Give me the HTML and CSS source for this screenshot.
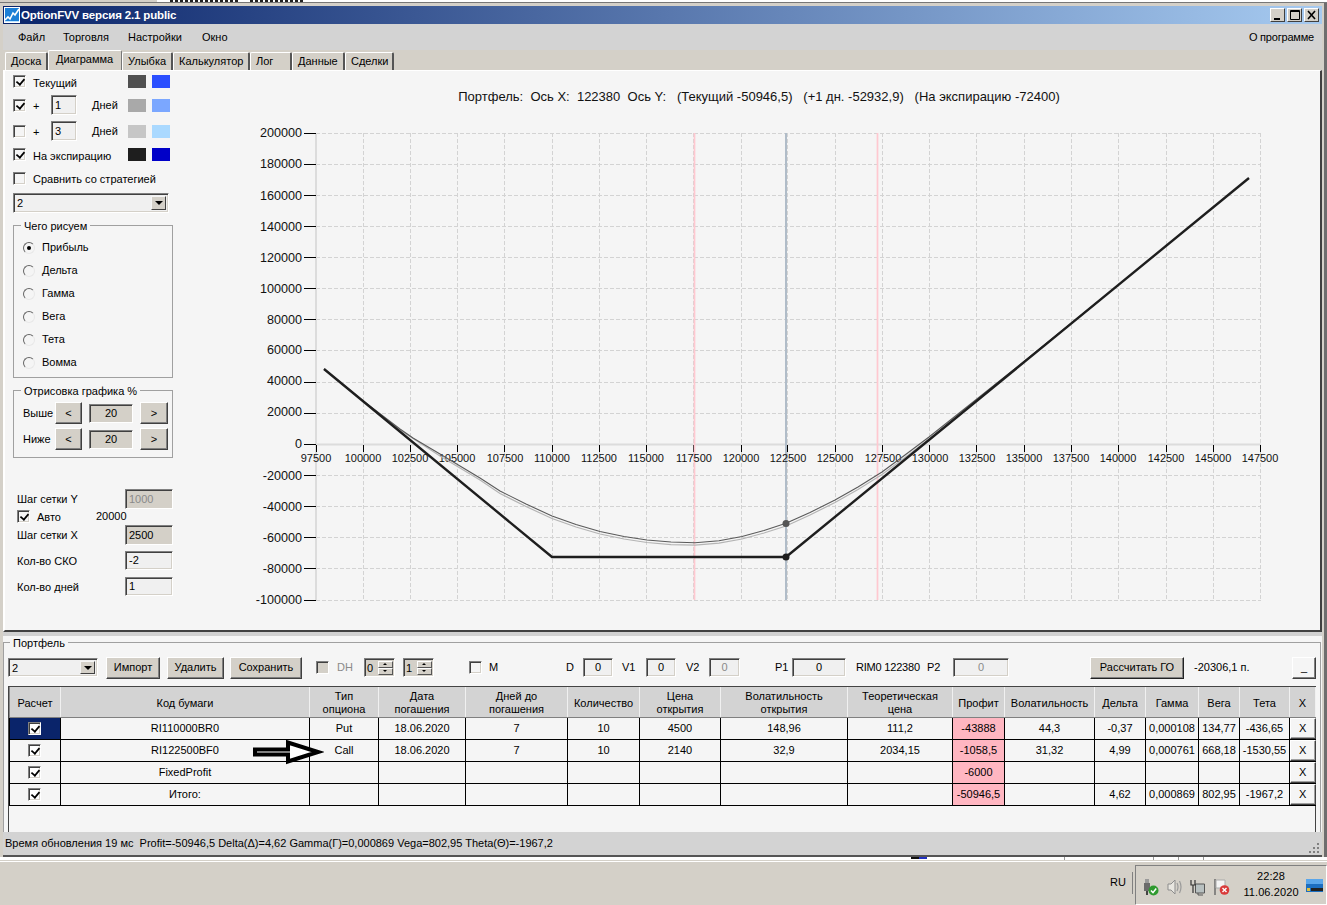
FILE: index.html
```html
<!DOCTYPE html>
<html lang="ru">
<head>
<meta charset="utf-8">
<title>OptionFVV</title>
<link rel="stylesheet" href="styles.css">
</head>
<body>
<div class="screen">
  <div class="desk-top"><span class="frag frag-a"></span><span class="frag frag-b"></span></div>
  <div class="window">
    <div class="titlebar">
      <svg class="logo" width="16" height="16" viewBox="0 0 16 16"><rect width="16" height="16" fill="#fff"/><rect x="1" y="1" width="14" height="14" fill="#1c7fd6"/><path d="M1 13 4 10 6 12 9 6 11 8 15 2" fill="none" stroke="#fff" stroke-width="1.6"/><path d="M1 15H15V14H1Z" fill="#bfe6ff"/></svg>
      <span class="title-text">OptionFVV версия 2.1 public</span>
      <span class="wbtns">
        <span class="wbtn"><svg width="13" height="12" viewBox="0 0 13 12"><path d="M3 9h6v2H3z" fill="#000"/></svg></span>
        <span class="wbtn"><svg width="13" height="12" viewBox="0 0 13 12"><path d="M2.5 1.5h9v9h-9z M2 2.5h10" fill="none" stroke="#000"/></svg></span>
        <span class="wbtn"><svg width="13" height="12" viewBox="0 0 13 12"><path d="M3 2l7 8M10 2l-7 8" fill="none" stroke="#000" stroke-width="1.6"/></svg></span>
      </span>
    </div>
    <div class="menubar">
      <span class="mi mi-1">Файл</span><span class="mi mi-2">Торговля</span><span class="mi mi-3">Настройки</span><span class="mi mi-4">Окно</span>
      <span class="mi about">О программе</span>
    </div>
    <div class="tabs">
      <span class="tab t-1">Доска</span><span class="tab t-2 active">Диаграмма</span><span class="tab t-3">Улыбка</span><span class="tab t-4">Калькулятор</span><span class="tab t-5">Лог</span><span class="tab t-6">Данные</span><span class="tab t-7">Сделки</span>
    </div>
    <div class="panel">
      <div class="side">
        <div class="row h13"><span class="chk on"></span><span class="lbl grow">Текущий</span><span class="sw c-a"></span><span class="sw c-b"></span></div>
        <div class="row h20 mt7"><span class="chk on"></span><span class="plus">+</span><span class="field w26">1</span><span class="lbl days grow">Дней</span><span class="sw c-c"></span><span class="sw c-d"></span></div>
        <div class="row h20 mt6"><span class="chk"></span><span class="plus">+</span><span class="field w26">3</span><span class="lbl days grow">Дней</span><span class="sw c-e"></span><span class="sw c-f"></span></div>
        <div class="row h13 mt7"><span class="chk on"></span><span class="lbl grow">На экспирацию</span><span class="sw c-g"></span><span class="sw c-h"></span></div>
        <div class="row h13 mt11"><span class="chk"></span><span class="lbl grow cmp">Сравнить со стратегией</span></div>
        <div class="combo w156 h20 mt8"><span class="combo-val">2</span><span class="combo-btn"><i class="tri"></i></span></div>
        <div class="group g-what mt12">
          <span class="legend">Чего рисуем</span>
          <div class="rad"><span class="radio on"></span><span class="lbl">Прибыль</span></div>
          <div class="rad"><span class="radio"></span><span class="lbl">Дельта</span></div>
          <div class="rad"><span class="radio"></span><span class="lbl">Гамма</span></div>
          <div class="rad"><span class="radio"></span><span class="lbl">Вега</span></div>
          <div class="rad"><span class="radio"></span><span class="lbl">Тета</span></div>
          <div class="rad"><span class="radio"></span><span class="lbl">Вомма</span></div>
        </div>
        <div class="group g-draw mt12">
          <span class="legend">Отрисовка графика %</span>
          <div class="draw-row"><span class="draw-l">Выше</span><span class="btn b-l">&lt;</span><span class="field gray f-draw">20</span><span class="btn b-r">&gt;</span></div>
          <div class="draw-row"><span class="draw-l">Ниже</span><span class="btn b-l">&lt;</span><span class="field gray f-draw">20</span><span class="btn b-r">&gt;</span></div>
        </div>
        <div class="prop h20 mt31"><span class="grow">Шаг сетки Y</span><span class="field gray dim w48">1000</span></div>
        <div class="prop h12 mt1"><span class="chk on"></span><span class="auto-l">Авто</span><span>20000</span></div>
        <div class="prop h20 mt3"><span class="grow">Шаг сетки X</span><span class="field gray w48">2500</span></div>
        <div class="prop h19 mt6"><span class="grow">Кол-во СКО</span><span class="field w48">-2</span></div>
        <div class="prop h19 mt7"><span class="grow">Кол-во дней</span><span class="field w48">1</span></div>
      </div>
      <svg class="chart" width="1140" height="560" viewBox="180 71 1140 560">
        <text class="chart-title" x="759" y="101">Портфель:  Ось X:  122380  Ось Y:   (Текущий -50946,5)   (+1 дн. -52932,9)   (На экспирацию -72400)</text>
        <path class="grid" d="M316 133.5H1261M316 164.5H1261M316 195.5H1261M316 226.5H1261M316 257.5H1261M316 288.5H1261M316 319.5H1261M316 350.5H1261M316 382.5H1261M316 413.5H1261M316 475.5H1261M316 506.5H1261M316 537.5H1261M316 568.5H1261M316 600.5H1261"/>
        <path class="grid" d="M363.5 133V600M410.5 133V600M457.5 133V600M504.5 133V600M552.5 133V600M599.5 133V600M646.5 133V600M693.5 133V600M741.5 133V600M787.5 133V600M835.5 133V600M882.5 133V600M929.5 133V600M976.5 133V600M1024.5 133V600M1071.5 133V600M1118.5 133V600M1166.5 133V600M1213.5 133V600M1260.5 133V600"/>
        <path class="axis" d="M316 133V600M316 444.5H1261"/>
        <path class="tick" d="M304 133.5H316M304 164.5H316M304 195.5H316M304 226.5H316M304 257.5H316M304 288.5H316M304 319.5H316M304 350.5H316M304 382.5H316M304 413.5H316M304 444.5H316M304 475.5H316M304 506.5H316M304 537.5H316M304 568.5H316M304 600.5H316"/>
        <path class="tick" d="M316.5 445V452M363.5 445V452M410.5 445V452M457.5 445V452M504.5 445V452M552.5 445V452M599.5 445V452M646.5 445V452M693.5 445V452M741.5 445V452M787.5 445V452M835.5 445V452M882.5 445V452M929.5 445V452M976.5 445V452M1024.5 445V452M1071.5 445V452M1118.5 445V452M1166.5 445V452M1213.5 445V452M1260.5 445V452"/>
        <path class="pink" d="M694.5 133V600M877.5 133V600"/>
        <path class="steel" d="M786 133V600"/>
        <g class="ylab">
          <text x="302" y="137">200000</text><text x="302" y="168">180000</text><text x="302" y="200">160000</text><text x="302" y="231">140000</text><text x="302" y="262">120000</text><text x="302" y="293">100000</text><text x="302" y="324">80000</text><text x="302" y="354">60000</text><text x="302" y="385">40000</text><text x="302" y="416">20000</text><text x="302" y="448">0</text><text x="302" y="480">-20000</text><text x="302" y="511">-40000</text><text x="302" y="542">-60000</text><text x="302" y="573">-80000</text><text x="302" y="604">-100000</text>
        </g>
        <g class="xlab">
          <text x="316" y="462">97500</text><text x="363" y="462">100000</text><text x="410" y="462">102500</text><text x="457" y="462">105000</text><text x="505" y="462">107500</text><text x="552" y="462">110000</text><text x="599" y="462">112500</text><text x="646" y="462">115000</text><text x="694" y="462">117500</text><text x="741" y="462">120000</text><text x="788" y="462">122500</text><text x="835" y="462">125000</text><text x="883" y="462">127500</text><text x="930" y="462">130000</text><text x="977" y="462">132500</text><text x="1024" y="462">135000</text><text x="1071" y="462">137500</text><text x="1118" y="462">140000</text><text x="1166" y="462">142500</text><text x="1213" y="462">145000</text><text x="1260" y="462">147500</text>
        </g>
        <polyline class="c-light" points="324,369 360,398.6 400,430 440,456 480,480 500,493.5 526,506.5 552,518.5 576,527 600,534 624,539 647,542.5 671,544.6 695,545.2 719,543.2 742,539 764,533 786,526 810,515 835,502.5 858,489.5 882,474.5 905,457.5 929,439 980,398 1040,349 1100,300"/>
        <polyline class="c-cur" points="324,369 360,398.5 400,429 413,438 440,454 480,478 500,491 526,504 552,516 576,524.5 600,531.5 624,536.5 647,540 671,542 695,542.7 719,540.8 742,536.5 764,530.5 786,523.3 810,512.5 835,500 858,487 882,472 905,455 929,437 980,396.5 1040,348.5 1100,300"/>
        <polyline class="c-exp" points="324,369 552,557 786,557 1249,178"/>
        <circle class="d-cur" cx="786" cy="523.5" r="3.5"/>
        <circle class="d-exp" cx="786" cy="557" r="3.5"/>
      </svg>
    </div>
    <div class="portfolio">
      <div class="pgroup">
        <span class="legend leg-p">Портфель</span>
        <div class="ctrls">
          <div class="combo w90 h19"><span class="combo-val">2</span><span class="combo-btn"><i class="tri"></i></span></div>
          <span class="btn b-imp">Импорт</span>
          <span class="btn b-del">Удалить</span>
          <span class="btn b-sav">Сохранить</span>
          <span class="chk off ml14"></span><span class="dim l-dh">DH</span>
          <span class="spin"><span class="spin-v">0</span><span class="spin-b"><i class="up"></i><i class="dn"></i></span></span>
          <span class="spin ml8"><span class="spin-v">1</span><span class="spin-b"><i class="up"></i><i class="dn"></i></span></span>
          <span class="chk ml35"></span><span class="l-m">M</span>
          <span class="l-d">D</span><span class="field ctr w30">0</span>
          <span class="l-v1">V1</span><span class="field ctr w30">0</span>
          <span class="l-v2">V2</span><span class="field ctr dim w31">0</span>
          <span class="l-p1">P1</span><span class="field ctr w54">0</span>
          <span class="l-rim">RIM0 122380</span><span class="l-p2">P2</span><span class="field ctr dim w56">0</span>
          <span class="btn b-go">Рассчитать ГО</span>
          <span class="l-go">-20306,1 п.</span>
          <span class="btn b-min">_</span>
        </div>
        <div class="gridwrap">
          <table class="dg">
            <colgroup>
              <col class="k51"><col class="k249"><col class="k69"><col class="k87"><col class="k102"><col class="k72"><col class="k81"><col class="k127"><col class="k105"><col class="k52"><col class="k90"><col class="k51"><col class="k53"><col class="k41"><col class="k50"><col class="k26">
            </colgroup>
            <thead>
              <tr><th>Расчет</th><th>Код бумаги</th><th>Тип<br>опциона</th><th>Дата<br>погашения</th><th>Дней до<br>погашения</th><th>Количество</th><th>Цена<br>открытия</th><th>Волатильность<br>открытия</th><th>Теоретическая<br>цена</th><th>Профит</th><th>Волатильность</th><th>Дельта</th><th>Гамма</th><th>Вега</th><th>Тета</th><th>X</th></tr>
            </thead>
            <tbody>
              <tr><td class="sel"><span class="chk on cell"></span></td><td>RI110000BR0</td><td>Put</td><td>18.06.2020</td><td>7</td><td>10</td><td>4500</td><td>148,96</td><td>111,2</td><td class="loss">-43888</td><td>44,3</td><td>-0,37</td><td>0,000108</td><td>134,77</td><td>-436,65</td><td class="xc"><span class="xbtn">X</span></td></tr>
              <tr><td><span class="chk on cell"></span></td><td>RI122500BF0</td><td>Call</td><td>18.06.2020</td><td>7</td><td>10</td><td>2140</td><td>32,9</td><td>2034,15</td><td class="loss">-1058,5</td><td>31,32</td><td>4,99</td><td>0,000761</td><td>668,18</td><td>-1530,55</td><td class="xc"><span class="xbtn">X</span></td></tr>
              <tr><td><span class="chk on cell"></span></td><td>FixedProfit</td><td></td><td></td><td></td><td></td><td></td><td></td><td></td><td class="loss">-6000</td><td></td><td></td><td></td><td></td><td></td><td class="xc"><span class="xbtn">X</span></td></tr>
              <tr><td><span class="chk on cell"></span></td><td>Итого:</td><td></td><td></td><td></td><td></td><td></td><td></td><td></td><td class="loss">-50946,5</td><td></td><td>4,62</td><td>0,000869</td><td>802,95</td><td>-1967,2</td><td class="xc"><span class="xbtn">X</span></td></tr>
            </tbody>
          </table>
          <svg class="arrow" width="72" height="26" viewBox="0 0 72 26"><path d="M3 10.500H36V3.500L66 13 36 22.500V15.500H3Z" fill="#fff" stroke="#000" stroke-width="4"/></svg>
        </div>
      </div>
    </div>
    <div class="status">
      <span>Время обновления 19 мс&nbsp; Profit=-50946,5 Delta(Δ)=4,62 Gamma(Г)=0,000869 Vega=802,95 Theta(Θ)=-1967,2</span>
      <svg class="grip" width="12" height="12" viewBox="0 0 12 12"><path d="M9 2h2v2H9zM5 6h2v2H5zM9 6h2v2H9zM1 10h2v2H1zM5 10h2v2H5zM9 10h2v2H9z" fill="#808080"/></svg>
    </div>
  </div>
  <div class="gapstrip"><span class="gapmark"></span></div>
  <div class="taskbar">
    <span class="lang">RU</span>
    <div class="tray">
      <svg class="ti" width="17" height="18" viewBox="0 0 17 18"><path d="M3 1h4v4H3z" fill="#9a9a9a"/><path d="M2 5h6v8H2z" fill="#6b6b6b"/><path d="M4 13h2v4H4z" fill="#444"/><circle cx="11.5" cy="12.5" r="5" fill="#2f9a2f"/><path d="M9 12.5l2 2.2 3.2-4.2" fill="none" stroke="#fff" stroke-width="1.5"/></svg>
      <svg class="ti" width="16" height="18" viewBox="0 0 16 18"><path d="M2 6h3l4-4v14l-4-4H2z" fill="#e8e6e0" stroke="#8d8d8d"/><path d="M11 5q2 4 0 8M13.5 3q3 6 0 12" fill="none" stroke="#9a9a9a" stroke-width="1.2"/></svg>
      <svg class="ti" width="17" height="18" viewBox="0 0 17 18"><path d="M6.5 6h9v9h-9z" fill="#b8c0c0" stroke="#555"/><path d="M9 15v2h5" fill="none" stroke="#555"/><path d="M2 2v5h4V2M4 7v8" fill="none" stroke="#333" stroke-width="1.2"/></svg>
      <svg class="ti" width="17" height="18" viewBox="0 0 17 18"><path d="M2 1v16" stroke="#666" stroke-width="1.4"/><path d="M3 2h9v8H3z" fill="#f4f4f4" stroke="#aaa"/><circle cx="11.5" cy="12" r="4.8" fill="#d93a3a"/><path d="M9.5 10l4 4M13.500 10l-4 4" stroke="#fff" stroke-width="1.4"/></svg>
      <div class="clock"><span>22:28</span><span>11.06.2020</span></div>
      <svg class="ti desk" width="17" height="13" viewBox="0 0 17 13"><rect width="17" height="13" fill="#1c6ec0"/><path d="M0 0h17v5H0z" fill="#5aa6ea"/><path d="M5 9h12v3H5z" fill="#222"/><path d="M1 9h3v3H1z" fill="#e0c040"/></svg>
    </div>
  </div>
</div>
</body>
</html>
```

FILE: styles.css
```css
* { box-sizing: border-box; }
html, body { margin: 0; padding: 0; }
body { font: 11px/13px "Liberation Sans", Arial, sans-serif; color: #000; background: #d4d0c8; }
.screen { width: 1327px; height: 905px; overflow: hidden; display: flex; flex-direction: column; }

.desk-top { height: 3px; flex: none; background: linear-gradient(90deg, #d4d0c8 0 157px, #fff 157px); display: flex; border-bottom: 1px solid #777; }
.frag { height: 2px; display: block; background: repeating-linear-gradient(90deg, #222 0 3px, transparent 3px 5px); }
.frag-a { margin-left: 170px; width: 70px; }
.frag-b { margin-left: 10px; width: 55px; }

.window { flex: none; width: 1327px; height: 854px; border-left: 3px solid #d4d0c8; border-right: 3px solid #6e6e6e; padding: 3px 2px 0 0; background: #d4d0c8; display: flex; flex-direction: column; }
.titlebar { flex: none; height: 18px; display: flex; align-items: center; padding: 0 3px 0 1px; color: #fff; background: linear-gradient(90deg, #0a246a, #a6caf0); }
.logo { flex: none; }
.title-text { margin-left: 1px; font: bold 11.5px/18px "Liberation Sans", Arial, sans-serif; letter-spacing: -.15px; }
.wbtns { margin-left: auto; display: flex; gap: 2px; }
.wbtn { width: 15px; height: 14px; display: flex; align-items: center; justify-content: center; background: #d4d0c8; border: 1px solid; border-color: #fff #404040 #404040 #fff; }

.menubar { flex: none; height: 26px; display: flex; align-items: center; background: #d3d3d3; }
.mi-1 { margin-left: 15px; width: 45px; }
.mi-2 { width: 65px; }
.mi-3 { width: 74px; }
.about { margin-left: auto; margin-right: 8px; letter-spacing: -.2px; }

.tabs { flex: none; height: 20px; display: flex; align-items: flex-end; padding-left: 2px; }
.tab { height: 18px; padding: 2px 0 0 5px; background: #d4d0c8; border-top: 1px solid #fff; border-left: 1px solid #fff; border-right: 2px solid #555; border-radius: 2px 2px 0 0; white-space: nowrap; overflow: hidden; }
.tab.active { height: 20px; padding: 2px 0 0 7px; background: #d4d0c8; border-right: 1px solid #777; }
.t-1 { width: 43px; } .t-2 { width: 74px; } .t-3 { width: 51px; } .t-4 { width: 77px; } .t-5 { width: 42px; } .t-6 { width: 53px; } .t-7 { width: 49px; }

.panel { flex: none; height: 562px; display: flex; background: #f5f5f5; border: solid; border-width: 1px 2px 2px 2px; border-color: #fff #404040 #404040 #fff; }
.side { flex: none; width: 175px; padding: 4px 0 0 8px; display: flex; flex-direction: column; }
.chart { flex: none; display: block; }

.row, .prop { display: flex; align-items: center; flex: none; width: 157px; }
.h12 { height: 12px; } .h13 { height: 13px; } .h19 { height: 19px; } .h20 { height: 20px; }
.mt1 { margin-top: 1px; } .mt3 { margin-top: 3px; } .mt6 { margin-top: 6px; } .mt7 { margin-top: 7px; } .mt8 { margin-top: 8px; } .mt11 { margin-top: 11px; } .mt12 { margin-top: 12px; } .mt31 { margin-top: 31px; }
.grow { flex: 1; white-space: nowrap; }
.lbl { margin-left: 7px; white-space: nowrap; }
.h13 .lbl { padding-top: 3px; }
.h13 .lbl.cmp { padding-top: 1px; }
.h19 .grow { padding-top: 2px; }
.row .lbl.days { margin-left: 15px; }
.plus { width: 18px; margin-left: 7px; flex: none; padding-top: 3px; }
.sw { width: 18px; height: 13px; flex: none; margin-left: 6px; padding: 0; }
.c-a { background: #505050; } .c-b { background: #2b4fff; } .c-c { background: #a9a9a9; } .c-d { background: #7ba7ff; } .c-e { background: #c6c6c6; } .c-f { background: #aad9ff; } .c-g { background: #1e1e1e; } .c-h { background: #0000c8; }

.chk { position: relative; width: 13px; height: 13px; flex: none; display: inline-block; background: #f5f5f5; border: 1px solid; border-color: #808080 #fff #fff #808080; box-shadow: inset 1px 1px #404040, inset -1px -1px #d4d0c8; }
.chk.on::after { content: ""; position: absolute; left: 2px; top: 2px; width: 7px; height: 4px; border-left: 2px solid #000; border-bottom: 2px solid #000; transform: rotate(-50deg) scale(.9); }
.chk.off { background: #d4d0c8; }
.chk.cell { display: block; margin: 0 0 0 18px; background: #fff; }

.field { display: flex; align-items: center; height: 20px; padding-left: 3px; flex: none; background: #f0f0f0; border: 1px solid; border-color: #808080 #fff #fff #808080; box-shadow: inset 1px 1px #404040, inset -1px -1px #d4d0c8; overflow: hidden; }
.h19 .field { height: 19px; }
.field.gray { background: #d4d0c8; }
.field.dim, .dim { color: #8a8a8a; }
.field.ctr { justify-content: center; padding: 0; height: 19px; }
.w26 { width: 26px; } .w30 { width: 30px; } .w31 { width: 31px; } .w48 { width: 48px; } .w54 { width: 54px; } .w56 { width: 56px; } .w90 { width: 90px; } .w156 { width: 156px; }

.combo { flex: none; display: flex; background: #f0f0f0; border: 1px solid; border-color: #808080 #fff #fff #808080; box-shadow: inset 1px 1px #404040, inset -1px -1px #d4d0c8; padding: 2px; }
.combo-val { flex: 1; line-height: 15px; padding-left: 1px; }
.combo-btn { width: 15px; display: flex; align-items: center; justify-content: center; background: #d4d0c8; border: 1px solid; border-color: #f5f5f5 #404040 #404040 #f5f5f5; }
.tri { width: 0; height: 0; border: 4px solid transparent; border-top: 4px solid #000; border-bottom: 0; }

.group { position: relative; flex: none; width: 160px; border: 1px solid #a0a0a0; }
.legend { position: absolute; left: 7px; top: -6px; padding: 0 3px; background: #f5f5f5; white-space: nowrap; }
.g-what { height: 153px; padding: 10px 0 0 9px; }
.rad { height: 23px; display: flex; align-items: center; }
.radio { position: relative; width: 12px; height: 12px; flex: none; border-radius: 50%; background: #f5f5f5; border: 1px solid; border-color: #666 #e8e8e8 #e8e8e8 #666; }
.radio.on::after { content: ""; position: absolute; left: 3px; top: 3px; width: 4px; height: 4px; border-radius: 50%; background: #000; }
.g-draw { height: 68px; padding: 11px 0 0 9px; }
.draw-row { display: flex; align-items: center; height: 22px; margin-bottom: 4px; }
.draw-l { width: 32px; flex: none; }
.btn { display: flex; align-items: center; justify-content: center; flex: none; height: 22px; background: #d4d0c8; border: 1px solid; border-color: #fff #404040 #404040 #fff; box-shadow: inset -1px -1px #808080; white-space: nowrap; }
.b-l { width: 27px; }
.b-r { width: 28px; }
.f-draw { width: 44px; margin: 0 7px; height: 19px; justify-content: center; padding: 0; }
.prop { padding-left: 4px; width: 160px; }
.auto-l { margin-left: 7px; width: 59px; padding-top: 2px; }

.grid { fill: none; stroke: #d3d3d3; stroke-dasharray: 4 2; }
.axis { fill: none; stroke: #dcdcdc; stroke-width: 2; }
.tick { fill: none; stroke: #000; }
.pink { fill: none; stroke: #ffc8d0; stroke-width: 1.7; }
.steel { fill: none; stroke: #b0bcc8; stroke-width: 2; }
.chart-title { font: 13px "Liberation Sans", Arial, sans-serif; text-anchor: middle; white-space: pre; fill: #111; }
.ylab text { font: 12.6px "Liberation Sans", Arial, sans-serif; text-anchor: end; fill: #111; }
.xlab text { font: 11px "Liberation Sans", Arial, sans-serif; text-anchor: middle; fill: #111; }
.c-light { fill: none; stroke: #b4b4b4; stroke-width: 1.2; }
.c-cur { fill: none; stroke: #5a5a5a; stroke-width: 1.1; }
.c-exp { fill: none; stroke: #1e1e1e; stroke-width: 2.4; stroke-linejoin: round; }
.d-cur { fill: #555; }
.d-exp { fill: #1e1e1e; }

.portfolio { flex: none; height: 200px; padding-top: 4px; background: #d0d0d0; }
.pgroup { position: relative; display: flow-root; height: 196px; background: #f5f5f5; }
.pgroup::before { content: ""; position: absolute; left: 0; right: 1px; top: 6px; bottom: 0; border: 1px solid #a0a0a0; border-bottom: 0; pointer-events: none; }
.legend.leg-p { top: 1px; left: 7px; }
.ctrls { position: relative; height: 23px; margin: 20px 0 0 5px; display: flex; align-items: center; }
.b-imp { width: 54px; margin-left: 8px; } .b-del { width: 57px; margin-left: 7px; } .b-sav { width: 72px; margin-left: 6px; }
.ml8 { margin-left: 8px; } .ml14 { margin-left: 14px; } .ml35 { margin-left: 35px; }
.l-dh { margin-left: 8px; width: 27px; flex: none; }
.spin { flex: none; width: 31px; height: 19px; display: flex; background: #d4d0c8; border: 1px solid; border-color: #808080 #fff #fff #808080; box-shadow: inset 1px 1px #404040; padding: 2px 1px 1px 2px; }
.spin-v { flex: 1; line-height: 15px; }
.spin-b { width: 15px; display: flex; flex-direction: column; }
.spin-b i { flex: 1; display: block; position: relative; background: #d4d0c8; border: 1px solid; border-color: #fff #555 #555 #fff; }
.spin-b i::after { content: ""; position: absolute; left: 4px; top: 1px; border: 2px solid transparent; }
.spin-b .up::after { border-top: 0; border-bottom-color: #000; }
.spin-b .dn::after { border-bottom: 0; border-top-color: #000; }
.l-m { margin-left: 7px; width: 77px; flex: none; }
.l-d { width: 17px; flex: none; }
.l-v1 { margin-left: 9px; width: 24px; flex: none; }
.l-v2 { margin-left: 10px; width: 23px; flex: none; }
.l-p1 { margin-left: 35px; width: 17px; flex: none; }
.l-rim { margin-left: 10px; width: 71px; flex: none; white-space: nowrap; letter-spacing: -.2px; }
.l-p2 { width: 26px; flex: none; }
.b-go { width: 94px; margin-left: 81px; border-color: #fff #222 #222 #fff; }
.l-go { margin-left: 10px; width: 98px; flex: none; }
.b-min { width: 24px; background: #f5f5f5; }

.gridwrap { position: relative; height: 146px; margin: 7px 0 0 5px; width: 1308px; border: solid #444; border-width: 1px 1px 0 1px; }
.dg { border-collapse: collapse; table-layout: fixed; width: 1306px; }
.k51 { width: 51px; } .k249 { width: 249px; } .k69 { width: 69px; } .k87 { width: 87px; } .k102 { width: 102px; } .k72 { width: 72px; } .k81 { width: 81px; } .k127 { width: 127px; } .k105 { width: 105px; } .k52 { width: 52px; } .k90 { width: 90px; } .k53 { width: 53px; } .k41 { width: 41px; } .k50 { width: 50px; } .k26 { width: 26px; }
.dg th { height: 30px; padding: 3px 0 0; font-weight: normal; text-align: center; line-height: 13px; background: #d3d3d3; border-right: 1px solid #f0f0f0; border-left: 1px solid #888; border-bottom: 1px solid #808080; white-space: nowrap; }
.dg td { height: 22px; padding: 1px 0 0; text-align: center; border: 1px solid #000; white-space: nowrap; }
.dg td.sel { background: #0a246a; }
.dg td.loss { background: #ffb6c1; }
.dg td.xc { padding: 0; border: 0; border-bottom: 1px solid #000; }
.xbtn { display: flex; height: 21px; align-items: center; justify-content: center; background: #f5f5f5; border: 1px solid; border-color: #fff #404040 #404040 #fff; box-shadow: inset -1px -1px #a0a0a0; }
.arrow { position: absolute; left: 243px; top: 52px; }

.status { flex: none; height: 25px; display: flex; align-items: center; justify-content: space-between; padding: 0 2px; background: #d3d3d3; border-bottom: 2px solid #555; }
.grip { margin-bottom: -6px; }

.gapstrip { flex: none; height: 4px; position: relative; border-bottom: 1px solid #d4d0c8; background: linear-gradient(#999, #999) 1064px 0 / 1px 3px no-repeat, linear-gradient(#999, #999) 1153px 0 / 1px 3px no-repeat, linear-gradient(#999, #999) 1178px 0 / 1px 3px no-repeat, linear-gradient(#999, #999) 1203px 0 / 1px 3px no-repeat, #fff; }
.gapmark { position: absolute; left: 911px; top: 0; width: 16px; height: 2px; background: linear-gradient(90deg, #111 0 8px, #2030c0 8px); }
.taskbar { flex: 1; display: flex; justify-content: flex-end; align-items: flex-end; background: #d4d0c8; border-top: 1px solid #fff; }
.lang { margin-right: 9px; height: 35px; line-height: 24px; }
.tray { width: 192px; height: 40px; display: flex; align-items: center; padding-left: 6px; border: 1px solid; border-color: #808080 #fff #fff #808080; position: relative; }
.tray::before { content: ""; position: absolute; left: -4px; top: 6px; height: 22px; border-left: 1px solid #808080; }
.ti { flex: none; margin-right: 7px; margin-top: 3px; }
.clock { flex: none; width: 70px; margin-left: -1px; display: flex; flex-direction: column; align-items: center; gap: 3px; margin-top: -1px; letter-spacing: .1px; }
.desk { margin: 0; }
```
